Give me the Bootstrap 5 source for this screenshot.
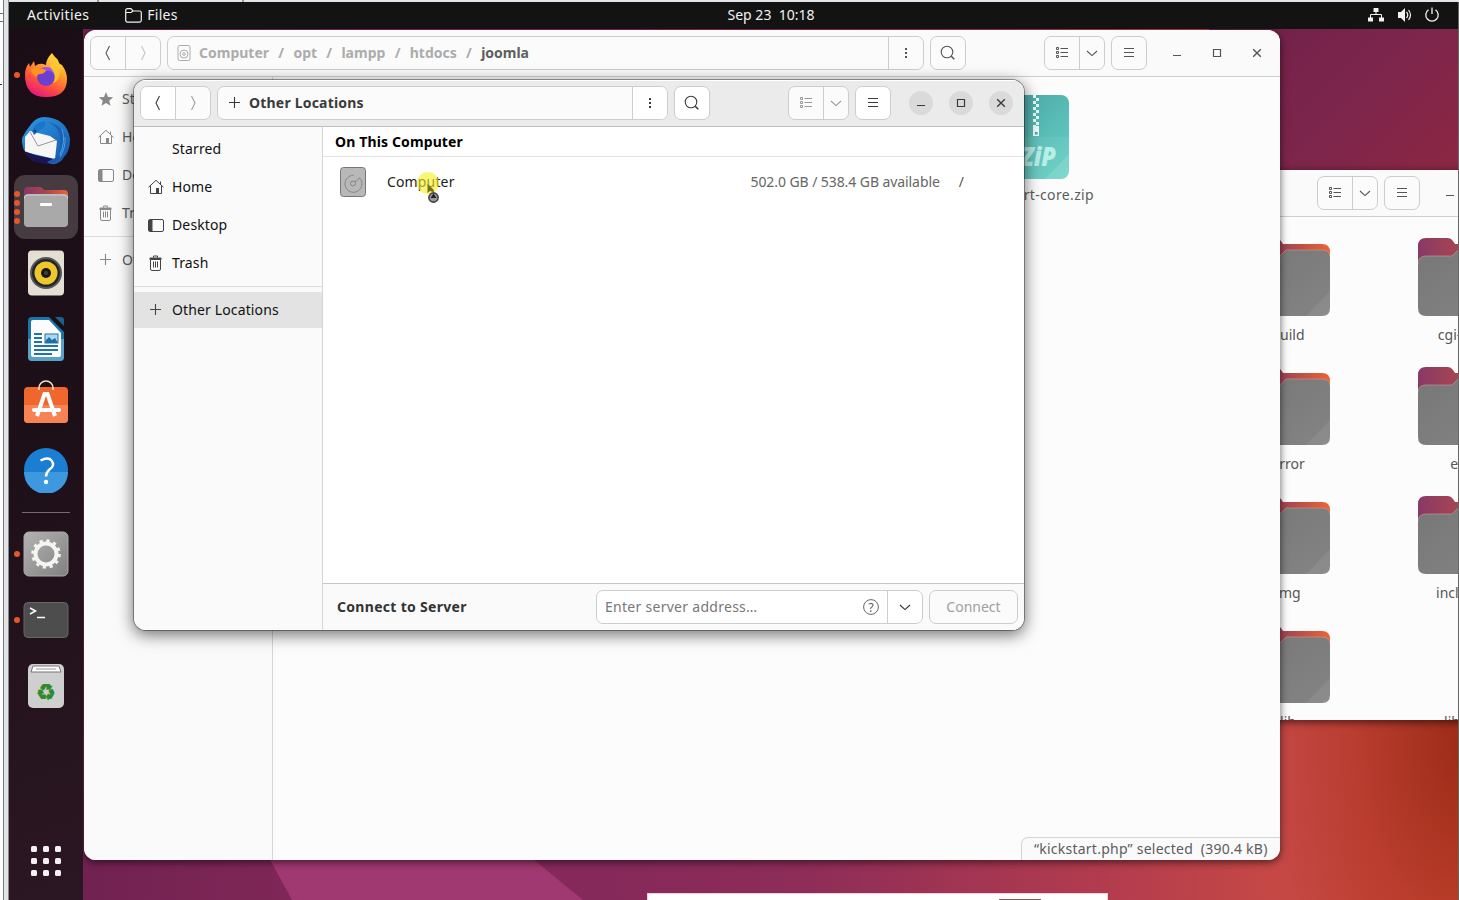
<!DOCTYPE html>
<html lang="en">
<head>
<meta charset="utf-8">
<title>Files</title>
<link href="https://cdn.jsdelivr.net/npm/bootstrap@5.3.0/dist/css/bootstrap.min.css" rel="stylesheet">
<style>
html,body{height:100%;overflow:hidden}
body{font-family:"Noto Sans","Open Sans",sans-serif;font-size:14px;line-height:20px;color:#111;background:#e2e6ea}
svg{display:block;flex:none}
.screen{width:1459px;height:900px;overflow:hidden}
.gutter{width:9px;background:linear-gradient(90deg,#fff 3px,#777 3px 4px,#e1e5ea 4px 8px,#888 8px)}
.gutter i{left:0;width:4px}
.topedge{height:2px;background:linear-gradient(90deg,transparent 88px,#999 88px 90px,transparent 90px 233px,#999 233px 235px,transparent 235px) #e2e6ea}
.desktop{width:1450px;overflow:hidden;background:
 radial-gradient(ellipse 190px 330px at 100% 25%,rgba(120,22,0,.55),rgba(140,22,0,.22) 55%,transparent) no-repeat 0 690px/1450px 210px,
 linear-gradient(135deg,#6d2049 0,#7c254c 45%,#93293f 100%) no-repeat 1200px 0/250px 260px,
 linear-gradient(90deg,#712250 75px,#84295a 350px,#85295a 600px,#8e2d58 800px,#b33c4e 1100px,#c54846 1260px,#c94835 1450px)}
.topbar{height:27px;background:#131313;color:#f2f2f2;padding:0 19px 0 18px}
.topbar>*{margin-top:-1px}
.dock{width:74px;background:linear-gradient(160deg,#1a0d15,#1e1018 50%,#2b1723)}
.dockcell{height:66px;flex:none}
.dockcell.on::before{content:"";position:absolute;inset:1px 5px;background:#463b41;border-radius:11px}
.dots{left:5px;top:0;bottom:0;width:6px;gap:3px}
.dots i{width:6px;height:6px;border-radius:50%;background:#e4572a}
.dock hr{width:48px;margin:8px auto 8px;border-top:1px solid #8d858a;opacity:.75}
.win{border-radius:12px;background:#fcfcfc;overflow:hidden;color:#5c5c5c;box-shadow:0 2px 7px 1px rgba(0,0,0,.5)}
.win-front{left:125px;top:78px;width:890px;height:550px;background:#fff;color:#111;box-shadow:0 0 0 1px rgba(0,0,0,.35),0 4px 16px 1px rgba(0,0,0,.55)}
.win-back{left:75px;top:28px;width:1196px;height:830px}
.win-side{left:1000px;top:168px;width:547px;height:550px;border-radius:12px 0 0 0}
.hbar{height:47px;flex:none;padding:6px;background:#fafafa;border-bottom:1px solid #cfcfcf;color:#555}
.win-front .hbar{background:#ebebeb;border-color:#bdbdbd;color:#3a3a3a;box-shadow:inset 0 1px #fff}
.tool{height:34px;border:1px solid #cdcdcd;border-radius:7px;background:#fbfbfb;overflow:hidden}
.tool>*{height:100%;display:flex;align-items:center;justify-content:center}
.tool>*+*{border-left:1px solid #cdcdcd}
.c34{width:34px}.c35{width:35px}.c25{width:25px}
.lit{background:#fff}
.tool.w36{width:36px}
.faded{color:#a0a0a0}
.win-back .faded{color:#c4c4c4}
.crumbs{font-weight:700;color:#acacac;word-spacing:1px}
.crumbs span{white-space:pre}
.wbtn{width:24px;height:24px;border-radius:50%;margin-right:16px}
.win-front .wbtn{background:#dadada}
.side{width:189px;background:#fafafa;border-right:1px solid #d6d6d6;flex:none}
.side a{height:38px;padding-left:14px;color:inherit;text-decoration:none;letter-spacing:.13px;white-space:nowrap}
.side a svg{margin-right:8px;color:#444}
.win-back .side a svg{color:#888}
.side .rule{height:1px;background:#dcdcdc;margin:4px 0 5px}
.side a.sel{height:36px;background:#e3e3e3}
.listhead{height:30px;border-bottom:1px solid #e2e2e2;padding:0 12px;line-height:30px;font-weight:700;color:#000;letter-spacing:.13px}
.foot{height:47px;border-top:1px solid #c4c4c4;background:#fafafa;padding:6px 6px 6px 14px;color:#333}
.entry{width:327px;background:#fff}
.connect{width:89px;color:#a0a0a0}
.ol{letter-spacing:.2px}.cs{letter-spacing:.3px}.en{letter-spacing:.28px}.ac{letter-spacing:.4px}.fl{letter-spacing:.25px}
.cp{letter-spacing:.15px}.av{letter-spacing:-.08px}.zl{letter-spacing:.35px}.st{letter-spacing:.24px}
.status{right:0;bottom:0;height:23px;width:259px;border:1px solid #d4d4d4;border-width:1px 0 0 1px;border-radius:7px 0 0 0;background:#fafafa;padding-left:12px;line-height:22px;white-space:pre}
.ic-grid{display:grid;grid-template-columns:172px 172px;grid-auto-rows:129px;margin:21px 0 0 193px;text-align:center;color:#555}
.ic-grid svg{margin:0 auto 7px}
.zipbox{left:876px;top:64px;width:134px;color:#5c5c5c}
.pointer{left:283px;top:92px}
.popup{left:638px;top:891px;width:461px;height:20px;background:#fff;border:1px solid #f3cfdd}
.popup i{position:absolute;left:351px;top:5px;width:42px;height:3px;background:#8d525c}
.rightline{right:0;top:0;bottom:0;width:1px;background:#666}
.appgrid{display:grid;grid-template-columns:repeat(3,6px);gap:6px;margin:auto auto 24px}
.appgrid i{height:6px;background:#f3f0f2;border-radius:1.5px}
</style>
</head>
<body>
<svg width="0" height="0" class="position-absolute">
<defs>
<linearGradient id="gFold" x1="0" x2="1" y1="0" y2="0"><stop stop-color="#883968"/><stop offset=".5" stop-color="#a84650"/><stop offset="1" stop-color="#ee6432"/></linearGradient>
<linearGradient id="gGray" x1="0" x2="1" y1="0" y2="1"><stop stop-color="#777"/><stop offset="1" stop-color="#848484"/></linearGradient>
<linearGradient id="gSilver" x1="0" x2="1" y1="0" y2="1"><stop stop-color="#b3b3b3"/><stop offset="1" stop-color="#818181"/></linearGradient>
<linearGradient id="gFox" x1=".8" x2=".3" y1="0" y2="1"><stop stop-color="#fff04a"/><stop offset=".4" stop-color="#ff9a28"/><stop offset=".7" stop-color="#ff4f3c"/><stop offset="1" stop-color="#e51682"/></linearGradient>
<linearGradient id="gTb" x1="0" x2="1" y1="0" y2="1"><stop stop-color="#2e9be6"/><stop offset="1" stop-color="#1657a8"/></linearGradient>
<linearGradient id="gZip" x1="0" x2="1" y1="0" y2="1"><stop stop-color="#469ea0"/><stop offset="1" stop-color="#66d2c5"/></linearGradient>
</defs>
<symbol id="prev" viewBox="0 0 16 16"><path d="M9.500 1 6 8l3.500 7" fill="none" stroke="currentColor" stroke-width="1.100"/></symbol>
<symbol id="next" viewBox="0 0 16 16"><path d="m6.500 1 3.500 7-3.500 7" fill="none" stroke="currentColor" stroke-width="1.100"/></symbol>
<symbol id="down" viewBox="0 0 16 16"><path d="m3 6 5 4.600L13 6" fill="none" stroke="currentColor" stroke-width="1.100"/></symbol>
<symbol id="dots3" viewBox="0 0 16 16"><path d="M7 3h2v2H7zM7 7h2v2H7zM7 11h2v2H7z" fill="currentColor"/></symbol>
<symbol id="find" viewBox="0 0 16 16"><circle cx="7" cy="7" r="5.800" fill="none" stroke="currentColor" stroke-width="1.100"/><path d="m11.200 11.200 3.100 3.100" stroke="currentColor" stroke-width="1.600"/></symbol>
<symbol id="list" viewBox="0 0 16 16"><path d="M2.500 2.500h2v2h-2zM2.500 6.500h2v2h-2zM2.500 10.500h2v2h-2zM6.500 3.500H14M6.500 7.500H14M6.500 11.500H14" fill="none" stroke="currentColor"/></symbol>
<symbol id="menu" viewBox="0 0 16 16"><path d="M3 3.500h10M3 7.500h10M3 11.500h10" stroke="currentColor" stroke-width="1.100"/></symbol>
<symbol id="mini" viewBox="0 0 16 16"><path d="M4 10.500h8" stroke="currentColor"/></symbol>
<symbol id="maxi" viewBox="0 0 16 16"><path d="M4.500 4.500h7v7h-7z" fill="none" stroke="currentColor" stroke-width="1.200"/></symbol>
<symbol id="shut" viewBox="0 0 16 16"><path d="m4.200 4.200 7.600 7.600M11.800 4.200l-7.600 7.600" stroke="currentColor" stroke-width="1.400"/></symbol>
<symbol id="plus" viewBox="0 0 16 16"><path d="M7.500 2v11M2 7.500h11" stroke="currentColor" stroke-width="1.100"/></symbol>
<symbol id="star" viewBox="0 0 16 16"><path d="m8 1 2 4.900 5.200.4-4 3.400 1.300 5.100L8 12l-4.500 2.800 1.300-5.100-4-3.400 5.200-.4z" fill="currentColor"/></symbol>
<symbol id="home" viewBox="0 0 16 16"><path d="m.5 8.300 7.500-7 7.500 7M2.500 7v7.500h11V7M12.500 2.500v3" fill="none" stroke="currentColor"/><path d="M8 9h3v5.500H8z" fill="currentColor"/></symbol>
<symbol id="desk" viewBox="0 0 16 16"><rect x=".5" y="2.500" width="15" height="12" rx="1.500" fill="none" stroke="currentColor"/><path d="M1 3h3.500v11H1z" fill="currentColor"/></symbol>
<symbol id="bin" viewBox="0 0 16 16"><path d="M2.500 4.500h10v9.500q0 1.500-1.500 1.500H4q-1.500 0-1.500-1.500zM5.500 2.500v-1.500h4v1.500M5.500 6.500v6M7.500 6.500v6M9.500 6.500v6" fill="none" stroke="currentColor"/><path d="M2 2.500h11l1 2H1z" fill="currentColor"/></symbol>
<symbol id="drive" viewBox="0 0 16 16"><rect x="2" y=".5" width="12" height="15" rx="1.500" fill="none" stroke="currentColor"/><circle cx="8" cy="9" r="4" fill="none" stroke="currentColor"/><circle cx="8" cy="9" r="1.300" fill="none" stroke="currentColor"/></symbol>
<symbol id="folder" viewBox="0 0 84 80"><path d="M0 8q0-8 8-8h22q3 0 5 3l2 3h39q8 0 8 8v26H0z" fill="url(#gFold)"/><path d="M0 26q0-8 8-8h26l5-5q2-2 5-1h32q8 0 8 8v50q0 8-8 8H8q-8 0-8-8z" fill="url(#gGray)"/><path d="M84 53v17q0 8-8 8H60z" fill="#fff" opacity=".07"/><path d="M0 26q0-8 8-8h26l5-5q2-2 5-1h32q8 0 8 7" fill="none" stroke="#b79a98" stroke-width=".7"/></symbol>
</svg>

<div class="screen d-flex position-relative">
 <div class="gutter position-relative flex-shrink-0">
  <i class="position-absolute border-bottom border-secondary" style="top:0;height:14px"></i>
  <i class="position-absolute border-top border-secondary" style="top:21px;height:876px"></i>
  <i class="position-absolute bg-dark" style="top:84px;height:1px;width:2px"></i>
 </div>
 <div class="d-flex flex-column">
 <div class="topedge"></div>
 <div class="desktop position-relative d-flex flex-column flex-grow-1">
  <svg class="position-absolute" style="left:0;top:830px" width="640" height="68"><path d="M246 0 283 68H574L491 0z" fill="#a03871"/></svg>

  <!-- Second file window, partly behind -->
  <section class="win win-side position-absolute">
   <div class="hbar d-flex align-items-center justify-content-end">
    <div class="tool d-flex" style="margin-right:6px"><div class="c34"><svg width="16" height="16"><use href="#list"/></svg></div><div class="c25"><svg width="16" height="16"><use href="#down"/></svg></div></div>
    <div class="tool w36"><div><svg width="16" height="16"><use href="#menu"/></svg></div></div>
    <div class="d-flex" style="margin-left:18px"><div class="wbtn d-flex justify-content-center align-items-center"><svg width="16" height="16"><use href="#mini"/></svg></div><div class="wbtn"></div><div class="wbtn me-2"></div></div>
   </div>
   <div class="ic-grid">
    <div><svg width="84" height="80"><use href="#folder"/></svg>build</div><div><svg width="84" height="80"><use href="#folder"/></svg>cgi-bin</div>
    <div><svg width="84" height="80"><use href="#folder"/></svg>error</div><div><svg width="84" height="80"><use href="#folder"/></svg>etc</div>
    <div><svg width="84" height="80"><use href="#folder"/></svg>img</div><div><svg width="84" height="80"><use href="#folder"/></svg>include</div>
    <div><svg width="84" height="80"><use href="#folder"/></svg>lib</div><div><svg width="84" height="80"></svg>lib64</div>
   </div>
  </section>

  <!-- joomla folder window -->
  <section class="win win-back position-absolute d-flex flex-column">
   <div class="hbar d-flex align-items-center">
    <div class="tool d-flex" style="margin-right:6px"><div class="c34"><svg width="16" height="16"><use href="#prev"/></svg></div><div class="c35 faded"><svg width="16" height="16"><use href="#next"/></svg></div></div>
    <div class="tool d-flex" style="width:757px"><div class="crumbs flex-grow-1 justify-content-start ps-2"><svg width="16" height="16" style="margin-right:7px"><use href="#drive"/></svg><span>Computer  /  opt  /  lampp  /  htdocs  /  </span><span style="color:#5e5e5e">joomla</span></div><div class="c35"><svg width="16" height="16"><use href="#dots3"/></svg></div></div>
    <div class="tool w36" style="margin-left:6px"><div><svg width="16" height="16"><use href="#find"/></svg></div></div>
    <div class="tool d-flex ms-auto" style="margin-right:6px"><div class="c34"><svg width="16" height="16"><use href="#list"/></svg></div><div class="c25"><svg width="16" height="16"><use href="#down"/></svg></div></div>
    <div class="tool w36"><div><svg width="16" height="16"><use href="#menu"/></svg></div></div>
    <div class="d-flex" style="margin-left:18px;margin-right:-11px"><div class="wbtn d-flex justify-content-center align-items-center"><svg width="16" height="16"><use href="#mini"/></svg></div><div class="wbtn d-flex justify-content-center align-items-center"><svg width="16" height="16"><use href="#maxi"/></svg></div><div class="wbtn d-flex justify-content-center align-items-center"><svg width="16" height="16"><use href="#shut"/></svg></div></div>
   </div>
   <div class="d-flex flex-grow-1">
    <nav class="side" style="padding-top:3px">
     <a class="d-flex align-items-center"><svg width="16" height="16"><use href="#star"/></svg>Starred</a>
     <a class="d-flex align-items-center"><svg width="16" height="16"><use href="#home"/></svg>Home</a>
     <a class="d-flex align-items-center"><svg width="16" height="16"><use href="#desk"/></svg>Desktop</a>
     <a class="d-flex align-items-center"><svg width="16" height="16"><use href="#bin"/></svg>Trash</a>
     <div class="rule"></div>
     <a class="d-flex align-items-center" style="height:36px"><svg width="16" height="16"><use href="#plus"/></svg>Other Locations</a>
    </nav>
    <div class="flex-grow-1"></div>
   </div>
   <div class="zipbox position-absolute text-end">
    <svg class="mx-auto" style="margin-bottom:5px" width="84" height="86"><rect y="1" width="84" height="84" rx="8" fill="url(#gZip)"/><path d="M0 43h84v34q0 8-8 8H8q-8 0-8-8z" fill="#fff" opacity=".06"/><path d="M84 60v17q0 8-8 8H60z" fill="#fff" opacity=".12"/><path d="M49.500 1v31M52.500 4v28" stroke="#e9fbf8" stroke-width="3" stroke-dasharray="3 3"/><path d="M48 32h6v10h-6z" fill="#eefaf8"/><path d="M50 38h2.500v2.500H50z" fill="#489f98"/><text x="36" y="72" font-size="26" font-weight="900" font-style="italic" textLength="35" lengthAdjust="spacingAndGlyphs" fill="#b7eee6">ZiP</text></svg>
    <span class="zl">kickstart-core.zip</span>
   </div>
   <div class="status position-absolute"><span class="st">“kickstart.php” selected  (390.4 kB)</span></div>
  </section>

  <!-- Other Locations window -->
  <section class="win win-front position-absolute d-flex flex-column">
   <div class="hbar d-flex align-items-center">
    <div class="tool d-flex" style="margin-right:6px"><div class="c34 lit"><svg width="16" height="16"><use href="#prev"/></svg></div><div class="c35 faded"><svg width="16" height="16"><use href="#next"/></svg></div></div>
    <div class="tool d-flex" style="width:451px"><div class="flex-grow-1 justify-content-start fw-bold" style="padding-left:9px"><svg width="16" height="16" style="margin-right:6px"><use href="#plus"/></svg><span class="ol">Other Locations</span></div><div class="c35 lit"><svg width="16" height="16"><use href="#dots3"/></svg></div></div>
    <div class="tool w36 lit" style="margin-left:6px"><div><svg width="16" height="16"><use href="#find"/></svg></div></div>
    <div class="tool d-flex ms-auto" style="margin-right:6px;color:#999"><div class="c34"><svg width="16" height="16"><use href="#list"/></svg></div><div class="c25"><svg width="16" height="16"><use href="#down"/></svg></div></div>
    <div class="tool w36 lit"><div><svg width="16" height="16"><use href="#menu"/></svg></div></div>
    <div class="d-flex" style="margin-left:18px;margin-right:-11px"><div class="wbtn d-flex justify-content-center align-items-center"><svg width="16" height="16"><use href="#mini"/></svg></div><div class="wbtn d-flex justify-content-center align-items-center"><svg width="16" height="16"><use href="#maxi"/></svg></div><div class="wbtn d-flex justify-content-center align-items-center"><svg width="16" height="16"><use href="#shut"/></svg></div></div>
   </div>
   <div class="d-flex flex-grow-1">
    <nav class="side" style="padding-top:3px">
     <a class="d-flex align-items-center" style="padding-left:38px">Starred</a>
     <a class="d-flex align-items-center"><svg width="16" height="16"><use href="#home"/></svg>Home</a>
     <a class="d-flex align-items-center"><svg width="16" height="16"><use href="#desk"/></svg>Desktop</a>
     <a class="d-flex align-items-center"><svg width="16" height="16"><use href="#bin"/></svg>Trash</a>
     <div class="rule"></div>
     <a class="d-flex align-items-center sel"><svg width="16" height="16"><use href="#plus"/></svg>Other Locations</a>
    </nav>
    <div class="flex-grow-1 d-flex flex-column">
     <div class="listhead">On This Computer</div>
     <div class="d-flex align-items-center" style="height:50px;padding-left:17px">
      <svg width="26" height="30"><rect x=".5" y=".5" width="25" height="29" rx="3" fill="#b8b8b8" stroke="#777"/><path d="M19.500 10.800a8.500 8.500 0 1 1-6-2.500M20 11l-5 4" fill="none" stroke="#858585"/><circle cx="13" cy="16.500" r="2.500" fill="none" stroke="#858585"/></svg>
      <span class="cp" style="margin-left:21px;color:#222">Computer</span>
      <span class="av ms-auto text-nowrap" style="color:#666;margin-right:19px">502.0 GB / 538.4 GB available</span><span style="color:#555;margin-right:60px">/</span>
     </div>
     <div class="foot d-flex align-items-center mt-auto">
      <span class="fw-bold cs">Connect to Server</span>
      <div class="tool entry d-flex ms-auto"><div class="flex-grow-1 justify-content-between" style="padding:0 8px;color:#777"><span class="en">Enter server address…</span><svg width="16" height="16" viewBox="0 0 16 16"><circle cx="8" cy="8" r="7.400" fill="none" stroke="#666"/><text x="8" y="12.500" text-anchor="middle" font-size="12" fill="#555">?</text></svg></div><div class="c35"><svg width="16" height="16"><use href="#down"/></svg></div></div>
      <div class="tool connect" style="margin-left:6px"><div>Connect</div></div>
     </div>
    </div>
   </div>
   <svg class="pointer position-absolute" width="28" height="34"><circle cx="11" cy="11" r="11" fill="#f8ef1c" opacity=".6"/><path d="M10.500 12v9l2.500-2 4 1.500-.5-3z" fill="#777016"/><circle cx="16.500" cy="25.500" r="4.600" fill="#999" stroke="#444" stroke-width="1.600"/><path d="m13.500 26 3-4.500 3 4.500z" fill="#222"/></svg>
  </section>

  <!-- Shell panel -->
  <header class="topbar d-flex align-items-center position-relative">
   <span class="ac">Activities</span>
   <svg width="17" height="15" viewBox="0 0 17 15" style="margin-left:36px;margin-right:5px" fill="none" stroke="#f2f2f2"><path d="M.7 2.500q0-1.800 1.800-1.800H6l2 2.300h6.500q1.800 0 1.800 1.800v7.500q0 1.800-1.800 1.800h-12q-1.800 0-1.800-1.800zM.7 4.500H6L8 3" stroke-width="1.200"/></svg><span class="fl">Files</span>
   <span class="position-absolute start-50 translate-middle-x text-nowrap" style="margin-left:37px;white-space:pre!important">Sep 23  10:18</span>
   <div class="d-flex align-items-center ms-auto" style="gap:12px">
    <svg width="16" height="14" fill="#f2f2f2"><path d="M5.500 0h5v4h-5zM0 9.500h5v4H0zM11 9.500h5v4h-5z"/><path d="M8 4v3M2.500 10V6.500h11V10" fill="none" stroke="#f2f2f2"/></svg>
    <svg width="16" height="16" viewBox="-1 0 16 16"><path d="M1 5h3l4-4v14l-4-4H1z" fill="#f2f2f2"/><path d="M9.500 5q2.500 3 0 6M11.500 3q4 5 0 10" fill="none" stroke="#f2f2f2" stroke-width="1.200"/></svg>
    <svg width="16" height="16" fill="none" stroke="#f2f2f2" stroke-width="1.300"><path d="M4.500 2.800a6.200 6.200 0 1 0 7 0M8 .5V7"/></svg>
   </div>
  </header>

  <!-- Dock -->
  <aside class="dock d-flex flex-column position-relative flex-grow-1" style="padding-top:13px">
   <div class="dockcell position-relative d-flex align-items-center justify-content-center"><div class="dots position-absolute d-flex flex-column justify-content-center"><i></i></div>
    <svg width="44" height="46" viewBox="0 0 44 46"><path d="M1 23q0-7 4-12l1 4 4-6 1 5q4-3 8-2l3 1q0-6 6-12 2 4 6 7 0 3 2 4l2 1q5 7 5 14 0 18-21 18T1 23z" fill="url(#gFox)"/><circle cx="22" cy="25" r="9" fill="#6d3fd0"/><path d="M13 22q2-7 9-7 9 0 9 9-3-6-9-5z" fill="#9b54ee"/><path d="M7 17q8-2 15 1-1 4-6 4-3 0-3 3-5-2-6-8z" fill="#ff9422"/><path d="M28 2q11 9 8 19-1 8-7 10 4-7-1-13-4-5 0-16z" fill="#ffc832" opacity=".8"/></svg></div>
   <div class="dockcell d-flex align-items-center justify-content-center">
    <svg width="48" height="48" viewBox="0 0 48 48"><path d="M10 6Q15 0 22 0q23 1 26 22 0 12-6 18l-2 3q-5 5-11 4l-17-3Q-1 36 0 21l4-7z" fill="url(#gTb)"/><path d="M26 5q13 5 12 20 0 12-7 21 14-5 14-21Q43 9 26 5z" fill="#1d60b4"/><path d="M40 12q4 12-2 26M43 20q1 10-5 20" fill="none" stroke="#43a4e9"/><path d="M3 20 8 14l20 5 7 5-2 18-30-7z" fill="#f6f6f6"/><path d="m8 15 8 14 18-6" fill="none" stroke="#999"/><path d="m2 34 11 4 18 4-6 3 4 2Q9 48 2 34z" fill="#1a1550"/><path d="M28 47q8-2 10-8l-7 3-5 3z" fill="#2257a5"/><path d="M10 14q4-10 13-10 2 6-5 9l-6 5z" fill="#1976c8"/><circle cx="13" cy="14" r="1.500" fill="#174071"/></svg></div>
   <div class="dockcell on position-relative d-flex align-items-center justify-content-center"><div class="dots position-absolute d-flex flex-column justify-content-center"><i></i><i></i><i></i><i></i></div>
    <svg class="position-relative" width="44" height="42"><path d="M0 5q0-4 4-4h13l3 3h20q4 0 4 4v14H0z" fill="url(#gFold)"/><rect y="8" width="44" height="33" rx="4" fill="#a9a9a9"/><path d="M0 13q0-4 4-4h36q4 0 4 4" fill="none" stroke="#d0d0d0"/><rect x="16" y="17" width="12" height="3" rx="1" fill="#fff"/></svg></div>
   <div class="dockcell d-flex align-items-center justify-content-center">
    <svg width="38" height="46"><rect x="1" y=".5" width="36" height="45" rx="4" fill="#e4dfd3"/><circle cx="19" cy="23" r="16" fill="#55575a"/><circle cx="19" cy="23" r="14" fill="#22262a"/><circle cx="19" cy="23" r="11.500" fill="#efc62c"/><circle cx="19" cy="23" r="5" fill="#181818"/><circle cx="19" cy="23" r="2" fill="#414141"/></svg></div>
   <div class="dockcell d-flex align-items-center justify-content-center">
    <svg width="38" height="46"><path d="M5 1h17l15 15v25q0 4-4 4H5q-4 0-4-4V5q0-4 4-4z" fill="#1b75a8"/><path d="M1 23h36v18q0 4-4 4H5q-4 0-4-4z" fill="#58a2c8"/><path d="M6 4h16l12 13v22q0 2-2 2H6q-2 0-2-2V6q0-2 2-2z" fill="#fbfbfb"/><path d="M28 1h6q3 0 3 3v6z" fill="#19618f"/><path d="M7 18h8M7 22h8M7 26h8M7 30h24M7 34h24M7 38h18" stroke="#2274a5" stroke-width="2"/><rect x="18" y="18" width="13" height="9" fill="#a8d8f2" stroke="#2274a5"/><path d="m18 27 1-3 3-3 3 3 3-2 3 5z" fill="#1c6fa0"/></svg></div>
   <div class="dockcell d-flex align-items-center justify-content-center">
    <svg width="46" height="46" style="margin-top:-8px"><rect x="1" y="9" width="44" height="36" rx="4" fill="#f0672e"/><path d="M1 27h44v14q0 4-4 4H5q-4 0-4-4z" fill="#f58354"/><path d="M16 12v-2a7 7 0 0 1 14 0v2" fill="none" stroke="#f6dfc4" stroke-width="1.600"/><path d="m14 38 7.500-22h3L32 38" fill="none" stroke="#fff" stroke-width="4"/><path d="M11 32h25" stroke="#fff" stroke-width="4" stroke-linecap="round"/></svg></div>
   <div class="dockcell d-flex align-items-center justify-content-center">
    <svg width="46" height="46" style="margin-top:-2px"><circle cx="23" cy="23" r="22" fill="#1c7ed3"/><path d="M1 25h44a22 22 0 0 1-44 0z" fill="#3d98dd"/><path d="M17.500 13.500q8-4 11 0 4 5-2 9-3.500 3-3.500 7" fill="none" stroke="#fff" stroke-width="2.400"/><circle cx="23" cy="35" r="2.200" fill="#fff"/></svg></div>
   <hr>
   <div class="dockcell position-relative d-flex align-items-center justify-content-center"><div class="dots position-absolute d-flex flex-column justify-content-center"><i></i></div>
    <svg width="46" height="46"><rect x="1" y="1" width="44" height="44" rx="5" fill="url(#gSilver)" stroke="#aaa"/><circle cx="23" cy="23" r="13.300" fill="none" stroke="#f5f5f2" stroke-width="3" stroke-dasharray="3.200 3.764"/><circle cx="23" cy="23" r="10.500" fill="none" stroke="#f5f5f2" stroke-width="4"/></svg></div>
   <div class="dockcell position-relative d-flex align-items-center justify-content-center"><div class="dots position-absolute d-flex flex-column justify-content-center"><i></i></div>
    <svg width="46" height="36"><rect x="1" y=".5" width="44" height="35" rx="4" fill="#4d4d4d" stroke="#666"/><path d="m7 6 5.500 3L7 12M14 15.500h8" fill="none" stroke="#fff" stroke-width="1.500"/></svg></div>
   <div class="dockcell d-flex align-items-center justify-content-center">
    <svg width="38" height="46"><rect x="1" y="1" width="36" height="44" rx="5" fill="#cfcfcf"/><path d="M6 3h26l2 6H4z" fill="#fff" stroke="#777"/><path d="M9 6h20" stroke="#999"/><text x="19" y="37" text-anchor="middle" font-family="DejaVu Sans" font-size="22" fill="#2d8a2a" stroke="#2d8a2a" stroke-width=".7">♻</text></svg></div>
   <div class="appgrid"><i></i><i></i><i></i><i></i><i></i><i></i><i></i><i></i><i></i></div>
  </aside>
  <div class="popup position-absolute"><i></i></div>
  <div class="rightline position-absolute"></div>
 </div>
 </div>
</div>
<script src="https://cdn.jsdelivr.net/npm/bootstrap@5.3.0/dist/js/bootstrap.bundle.min.js"></script>
</body>
</html>
